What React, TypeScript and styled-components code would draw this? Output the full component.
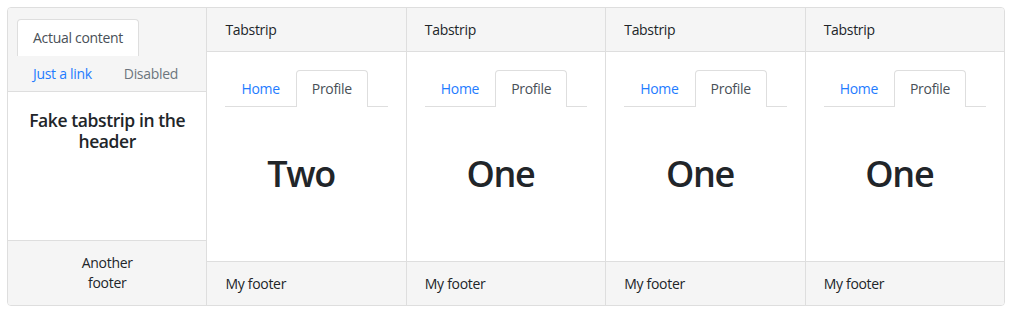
import React from "react";
import styled, { createGlobalStyle } from "styled-components";

const Global = createGlobalStyle`
  html, body { margin: 0; padding: 0; background: #fff; }
  body {
    font-family: "Open Sans", "Noto Sans", "Liberation Sans", sans-serif;
    font-size: 14px;
    line-height: 20px;
    color: #212529;
  }
  * { box-sizing: border-box; }
`;

const Page = styled.div`
  padding: 7px;
`;

const CardGroup = styled.div`
  display: flex;
  height: 299px;
  border: 1px solid #dedede;
  border-radius: 4px;
  overflow: hidden;
`;

const Card = styled.div`
  flex: 1 1 0;
  min-width: 0;
  display: flex;
  flex-direction: column;
  & + & {
    border-left: 1px solid #dedede;
  }
`;

const CardHeader = styled.div<{ $tabs?: boolean }>`
  background: #f5f5f5;
  border-bottom: 1px solid #dedede;
  padding: ${(p) => (p.$tabs ? "11px 9px 0" : "12px 18px 11px")};
  letter-spacing: -0.3px;
`;

const CardBody = styled.div`
  flex: 1;
  padding: 18px 18px 16px;
`;

const CardFooter = styled.div<{ $center?: boolean }>`
  background: #f5f5f5;
  border-top: 1px solid #dedede;
  padding: ${(p) => (p.$center ? "12px 16px 12px" : "12px 18px 11px")};
  text-align: ${(p) => (p.$center ? "center" : "left")};
  letter-spacing: -0.3px;
`;

const Nav = styled.div<{ $wrap?: boolean; $line?: boolean }>`
  display: flex;
  flex-wrap: ${(p) => (p.$wrap ? "wrap" : "nowrap")};
  border-bottom: ${(p) => (p.$line ? "1px solid #dedede" : "none")};
`;

const Tab = styled.span<{ $active?: boolean; $disabled?: boolean }>`
  display: block;
  padding: 8px 15px;
  border: 1px solid ${(p) => (p.$active ? "#dedede" : "transparent")};
  border-bottom: none;
  border-top-left-radius: 4px;
  border-top-right-radius: 4px;
  margin-bottom: -1px;
  background: ${(p) => (p.$active ? "#fff" : "transparent")};
  color: ${(p) => (p.$active ? "#495057" : p.$disabled ? "#6c757d" : "#1f7cff")};
  letter-spacing: -0.3px;
  white-space: nowrap;
`;

const FakeTitle = styled.div`
  font-size: 17.5px;
  line-height: 21px;
  font-weight: 600;
  text-align: center;
  letter-spacing: -0.4px;
`;

const Pane = styled.div`
  text-align: center;
  font-size: 36px;
  line-height: 48px;
  font-weight: 600;
  padding-right: 11px;
  margin-top: 43px;
  letter-spacing: -1.3px;
`;

const tabCards = ["Two", "One", "One", "One"];

export default function App() {
  return (
    <>
      <Global />
      <Page>
        <CardGroup>
          <Card>
            <CardHeader $tabs>
              <Nav $wrap>
                <Tab $active>Actual content</Tab>
                <Tab>Just a link</Tab>
                <Tab $disabled>Disabled</Tab>
              </Nav>
            </CardHeader>
            <CardBody>
              <FakeTitle>Fake tabstrip in the header</FakeTitle>
            </CardBody>
            <CardFooter $center>
              Another
              <br />
              footer
            </CardFooter>
          </Card>
          {tabCards.map((word, i) => (
            <Card key={i}>
              <CardHeader>Tabstrip</CardHeader>
              <CardBody>
                <Nav $line>
                  <Tab>Home</Tab>
                  <Tab $active>Profile</Tab>
                </Nav>
                <Pane>{word}</Pane>
              </CardBody>
              <CardFooter>My footer</CardFooter>
            </Card>
          ))}
        </CardGroup>
      </Page>
    </>
  );
}
